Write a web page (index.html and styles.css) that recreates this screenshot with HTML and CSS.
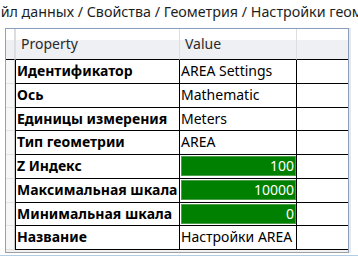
FILE: index.html
```
<!DOCTYPE html>
<html lang="ru">
<head>
    <meta charset="UTF-8">
    <meta name="viewport" content="width=device-width, initial-scale=1.0">
    <title>Настройки геометрии</title>
    <link rel="stylesheet" href="styles.css">
</head>
<body>
    <div class="crumbs">
        <span class="path">Файл данных / Свойства / Геометрия / Настройки геометрии</span>
    </div>
    <div class="panel">
        <div class="row head">
            <div class="rh"></div>
            <div class="cell">Property</div>
            <div class="cell">Value</div>
            <div class="cell"></div>
        </div>
        <div class="row">
            <div class="rh"></div>
            <div class="cell name">Идентификатор</div>
            <div class="cell">AREA Settings</div>
            <div class="cell"></div>
        </div>
        <div class="row">
            <div class="rh"></div>
            <div class="cell name">Ось</div>
            <div class="cell">Mathematic</div>
            <div class="cell"></div>
        </div>
        <div class="row">
            <div class="rh"></div>
            <div class="cell name">Единицы измерения</div>
            <div class="cell">Meters</div>
            <div class="cell"></div>
        </div>
        <div class="row">
            <div class="rh"></div>
            <div class="cell name">Тип геометрии</div>
            <div class="cell">AREA</div>
            <div class="cell"></div>
        </div>
        <div class="row">
            <div class="rh"></div>
            <div class="cell name">Z Индекс</div>
            <div class="cell"><div class="bar">100</div></div>
            <div class="cell"></div>
        </div>
        <div class="row">
            <div class="rh"></div>
            <div class="cell name">Максимальная шкала</div>
            <div class="cell"><div class="bar">10000</div></div>
            <div class="cell"></div>
        </div>
        <div class="row">
            <div class="rh"></div>
            <div class="cell name">Минимальная шкала</div>
            <div class="cell"><div class="bar">0</div></div>
            <div class="cell"></div>
        </div>
        <div class="row">
            <div class="rh"></div>
            <div class="cell name">Название</div>
            <div class="cell">Настройки AREA</div>
            <div class="cell"></div>
        </div>
    </div>
    <div class="footer"></div>
</body>
</html>
```

FILE: styles.css
```
body {
    margin: 0;
    background: #fff;
    font-family: "Noto Sans", "Open Sans", sans-serif;
    font-size: 14px;
    color: #000;
}
.crumbs {
    height: 28px;
    overflow: hidden;
    white-space: nowrap;
    font-size: 14.3px;
    line-height: 23px;
    color: #1e1e1e;
}
.path {
    display: inline-block;
    margin-left: -19px;
}
.panel {
    width: 342px;
    margin-left: 5px;
    padding-bottom: 2px;
    background: #f0f0f0;
    border-top: 1px solid #8a9fbc;
    border-right: 1px solid #8a9fbc;
    border-left: 1px solid #a0a0a0;
    border-bottom: 1px solid #a0a0a0;
    box-shadow: 2px 0 0 #e6e8ec;
}
.row {
    display: grid;
    grid-template-columns: 9px 164px 117px 52px;
    height: 23.75px;
    background: #fff;
}
.rh {
    background: #f7f7f7;
    border-right: 1px solid #c8c8c8;
    border-bottom: 1px solid #e2e2e2;
}
.cell {
    box-sizing: border-box;
    border-left: 1px solid #000;
    border-bottom: 1px solid #000;
    padding-left: 1px;
    line-height: 22px;
    white-space: nowrap;
    overflow: hidden;
}
.name {
    font-weight: bold;
}
.head {
    height: 31px;
    background: linear-gradient(#fff 0, #fff 35%, #eff0f4 35%, #eff0f4 100%);
}
.head .rh {
    background: transparent;
    border-bottom: 1px solid #000;
    border-right: 1px solid #dadce0;
}
.head .cell {
    border-left: 1px solid #dcdee2;
    padding-left: 5px;
    line-height: 30px;
    color: #2a2a2a;
}
.head .cell:first-of-type {
    border-left: none;
}
.bar {
    height: 18px;
    margin: 1px 0 0 0;
    padding-right: 1px;
    background: #008000;
    border: 1px solid #4b9f4b;
    color: #fff;
    text-align: right;
    line-height: 18px;
}
.footer {
    margin-top: 2px;
    height: 2px;
    border-top: 1px solid #b4cde6;
}
```
